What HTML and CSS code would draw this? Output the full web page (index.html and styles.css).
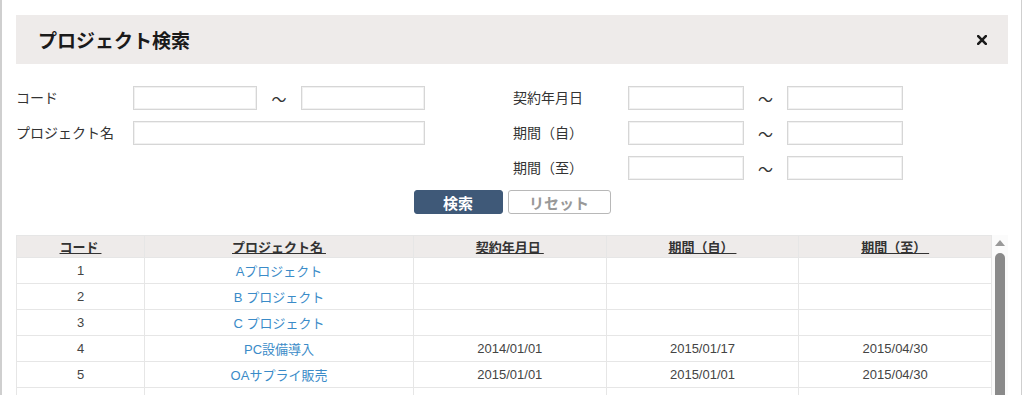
FILE: index.html
```html
<!DOCTYPE html>
<html lang="ja">
<head>
  <meta charset="UTF-8">
  <meta name="viewport" content="width=device-width, initial-scale=1.0">
  <title>プロジェクト検索</title>
  <link rel="stylesheet" href="styles.css">
</head>
<body>
  <div class="dialog">
    <div class="dialog-header">
      <h2>プロジェクト検索</h2>
      <button class="close-button" type="button" aria-label="閉じる">
        <svg width="10" height="10" viewBox="0 0 10 10"><path d="M1.2 1.2L8.8 8.8M8.8 1.2L1.2 8.8" stroke="#1a1a1a" stroke-width="2.6" stroke-linecap="square"/></svg>
      </button>
    </div>

    <form id="search-form" class="search-form">
      <div class="form-group left">
        <div class="form-row">
          <label for="code-from">コード</label>
          <input type="text" id="code-from" class="short">
          <span class="tilde">〜</span>
          <input type="text" id="code-to" class="short">
        </div>
        <div class="form-row">
          <label for="name">プロジェクト名</label>
          <input type="text" id="name" class="long">
        </div>
      </div>
      <div class="form-group right">
        <div class="form-row">
          <label for="contract-from">契約年月日</label>
          <input type="text" id="contract-from" class="date">
          <span class="tilde">〜</span>
          <input type="text" id="contract-to" class="date">
        </div>
        <div class="form-row">
          <label for="start-from">期間（自）</label>
          <input type="text" id="start-from" class="date">
          <span class="tilde">〜</span>
          <input type="text" id="start-to" class="date">
        </div>
        <div class="form-row">
          <label for="end-from">期間（至）</label>
          <input type="text" id="end-from" class="date">
          <span class="tilde">〜</span>
          <input type="text" id="end-to" class="date">
        </div>
      </div>
      <div class="buttons">
        <button type="submit" class="search-button">検索</button>
        <button type="reset" class="reset-button">リセット</button>
      </div>
    </form>

    <div class="results">
      <div class="table-wrap">
        <table class="project-table">
          <thead>
            <tr>
              <th class="col-code"><a href="#">コード&nbsp;</a></th>
              <th class="col-name"><a href="#">プロジェクト名&nbsp;</a></th>
              <th class="col-date"><a href="#">契約年月日&nbsp;</a></th>
              <th class="col-date"><a href="#">期間（自）&nbsp;</a></th>
              <th class="col-date"><a href="#">期間（至）&nbsp;</a></th>
            </tr>
          </thead>
          <tbody id="project-rows"></tbody>
        </table>
      </div>
      <div class="scrollbar">
        <div class="scroll-up"></div>
        <div class="scroll-thumb"></div>
      </div>
    </div>
  </div>

  <script>
    const projects = [
      { code: 1, name: "Aプロジェクト", contract: "", start: "", end: "" },
      { code: 2, name: "B プロジェクト", contract: "", start: "", end: "" },
      { code: 3, name: "C プロジェクト", contract: "", start: "", end: "" },
      { code: 4, name: "PC設備導入", contract: "2014/01/01", start: "2015/01/17", end: "2015/04/30" },
      { code: 5, name: "OAサプライ販売", contract: "2015/01/01", start: "2015/01/01", end: "2015/04/30" },
    ];

    const rows = document.getElementById("project-rows");
    projects.forEach((p) => {
      const tr = document.createElement("tr");
      tr.innerHTML = `
        <td>${p.code}</td>
        <td><a href="#">${p.name}</a></td>
        <td>${p.contract}</td>
        <td>${p.start}</td>
        <td>${p.end}</td>
      `;
      rows.appendChild(tr);
    });
    // the next row starts at the bottom edge of the dialog
    const more = document.createElement("tr");
    more.className = "more-row";
    more.innerHTML = "<td></td><td></td><td></td><td></td><td></td>";
    rows.appendChild(more);

    document.getElementById("search-form").addEventListener("submit", (e) => {
      e.preventDefault();
    });
  </script>
</body>
</html>
```

FILE: styles.css
```css
  html, body {
    margin: 0;
    height: 100%;
    overflow: hidden;
    background: #fff;
  }
  body {
    font-family: "Liberation Sans", "Noto Sans CJK JP", sans-serif;
    color: #333;
  }
  .dialog {
    box-sizing: border-box;
    width: 1022px;
    height: 100%;
    padding: 15px 13px 0 14px;
    border-left: 2px solid #cfcfcf;
    border-right: 1px solid #cfcfcf;
  }
  .dialog-header {
    display: flex;
    align-items: center;
    justify-content: space-between;
    height: 49px;
    padding: 0 21px 0 22px;
    background: #eeebea;
  }
  .dialog-header h2 {
    margin: 0;
    font-family: "Noto Sans CJK JP", sans-serif;
    font-size: 19px;
    font-weight: bold;
    color: #1a1a1a;
  }
  .close-button {
    display: flex;
    padding: 0;
    border: none;
    background: none;
    cursor: pointer;
  }
  .search-form {
    display: grid;
    grid-template-columns: 497px 1fr;
    padding-top: 22px;
  }
  .form-group {
    display: flex;
    flex-direction: column;
    gap: 11px;
  }
  .form-row {
    display: flex;
    align-items: center;
    height: 24px;
  }
  .form-row label {
    font-family: "Noto Sans CJK JP", sans-serif;
    font-size: 14px;
    color: #333;
    margin-top: -3px;
  }
  .left label {
    width: 117px;
  }
  .right label {
    width: 115px;
  }
  .form-row input {
    box-sizing: border-box;
    height: 24px;
    margin: 0;
    border: 1px solid #d6d6d6;
    box-shadow: inset 0 0 0 1px #f1f1f1;
    background: #fff;
  }
  input.short {
    width: 124px;
  }
  input.long {
    width: 292px;
  }
  input.date {
    width: 116px;
  }
  .tilde {
    font-family: "Noto Sans CJK JP", sans-serif;
    font-size: 15px;
    color: #333;
    text-align: center;
  }
  .left .tilde {
    width: 44px;
  }
  .right .tilde {
    width: 43px;
  }
  .buttons {
    grid-column: 1 / 3;
    display: flex;
    justify-content: center;
    gap: 5px;
    padding-top: 10px;
  }
  .buttons button {
    box-sizing: border-box;
    height: 24px;
    padding: 0;
    border-radius: 3px;
    font-family: "Noto Sans CJK JP", sans-serif;
    font-size: 15px;
    font-weight: bold;
    cursor: pointer;
  }
  .search-button {
    width: 89px;
    background: #3f5978;
    border: 1px solid #3f5978;
    color: #fff;
  }
  .reset-button {
    width: 103px;
    background: #fff;
    border: 1px solid #b8b8b8;
    color: #999;
  }
  .results {
    display: flex;
    margin-top: 21px;
  }
  .table-wrap {
    flex: 1;
  }
  .project-table {
    width: 100%;
    border-collapse: collapse;
    table-layout: fixed;
    font-size: 13px;
  }
  .project-table th,
  .project-table td {
    border: 1px solid #e6e6e6;
    text-align: center;
    padding: 0;
  }
  .project-table th {
    height: 21px;
    background: #eeebea;
    font-family: "Noto Sans CJK JP", sans-serif;
    font-weight: bold;
  }
  .project-table th a {
    color: #333;
    text-decoration: underline;
  }
  .project-table td {
    height: 25px;
    color: #444;
  }
  .project-table td a {
    color: #3a8bc8;
    text-decoration: none;
  }
  .col-code {
    width: 127px;
  }
  .col-name {
    width: 268px;
  }
  .col-date {
    width: auto;
  }
  .scrollbar {
    display: flex;
    flex-direction: column;
    align-items: center;
    width: 16px;
    padding-top: 5px;
    background: #fbfbfb;
  }
  .scroll-up {
    width: 0;
    height: 0;
    border-left: 5px solid transparent;
    border-right: 5px solid transparent;
    border-bottom: 6px solid #999;
  }
  .scroll-thumb {
    width: 10px;
    height: 200px;
    margin-top: 7px;
    border-radius: 5px;
    background: #8a8a8a;
  }
```
